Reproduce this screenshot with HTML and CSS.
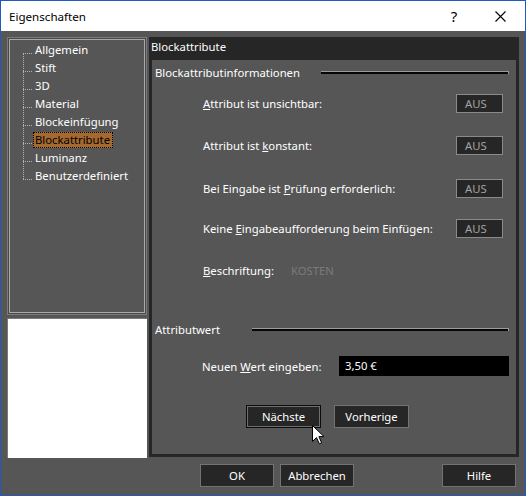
FILE: index.html
```html
<!DOCTYPE html>
<html lang="de">
<head>
<meta charset="utf-8">
<title>Eigenschaften</title>
<link rel="stylesheet" href="styles.css">
</head>
<body>
<div class="window">
  <div class="titlebar">
    <span class="title">Eigenschaften</span>
    <span class="tbtn help">?</span>
    <span class="tbtn close"><svg width="11" height="11" viewBox="0 0 11 11"><path d="M0.5 0.5 L10.5 10.5 M10.5 0.5 L0.5 10.5" stroke="#000" stroke-width="1.1" fill="none"/></svg></span>
  </div>
  <div class="content">
    <div class="main">
      <div class="leftcol">
        <div class="tree">
          <ul class="tree-list">
            <li><span class="item">Allgemein</span></li>
            <li><span class="item">Stift</span></li>
            <li><span class="item">3D</span></li>
            <li><span class="item">Material</span></li>
            <li><span class="item">Blockeinfügung</span></li>
            <li><span class="item selected">Blockattribute</span></li>
            <li><span class="item">Luminanz</span></li>
            <li><span class="item">Benutzerdefiniert</span></li>
          </ul>
        </div>
        <div class="preview"></div>
      </div>
      <div class="panel">
        <div class="panel-title">Blockattribute</div>
        <div class="panel-body">
          <div class="sec sec-info"><span class="sec-label">Blockattributinformationen</span><span class="rule rule-info"></span></div>
          <div class="row row-1"><span class="lbl"><u>A</u>ttribut ist unsichtbar:</span><span class="val">AUS</span></div>
          <div class="row row-2"><span class="lbl">Attribut ist <u>k</u>onstant:</span><span class="val">AUS</span></div>
          <div class="row row-3"><span class="lbl">Bei Eingabe ist <u>P</u>rüfung erforderlich:</span><span class="val">AUS</span></div>
          <div class="row row-4"><span class="lbl">Keine <u>E</u>ingabeaufforderung beim Einfügen:</span><span class="val">AUS</span></div>
          <div class="row row-5"><span class="lbl-fixed"><u>B</u>eschriftung:</span><span class="tag">KOSTEN</span></div>
          <div class="sec sec-value"><span class="sec-label">Attributwert</span><span class="rule rule-value"></span></div>
          <div class="input-row"><span class="lbl">Neuen <u>W</u>ert eingeben:</span><span class="input">3,50 €</span></div>
          <div class="nav-row"><span class="btn btn-default">Nächste</span><span class="btn">Vorherige</span></div>
        </div>
      </div>
    </div>
    <div class="buttons">
      <span class="btn dlg ok">OK</span>
      <span class="btn dlg cancel">Abbrechen</span>
      <span class="btn dlg hilfe">Hilfe</span>
    </div>
  </div>
  <svg class="cursor" width="13" height="20" viewBox="0 0 13 20"><path d="M0.5 0.5 L0.5 16.5 L4.5 12.5 L7.3 18.8 L9.6 17.8 L6.9 11.6 L12 11.6 Z" fill="#fff" stroke="#000" stroke-width="1"/></svg>
</div>
</body>
</html>
```
FILE: styles.css
```css
html, body {
  margin: 0;
  padding: 0;
  background: #565656;
}
body {
  font-family: "Noto Sans", "Open Sans", sans-serif;
  font-size: 11.3px;
  color: #fff;
}
.window {
  position: relative;
  width: 526px;
  height: 496px;
  box-sizing: border-box;
  border: 1px solid #1e5bbf;
  background: #565656;
  overflow: hidden;
}
.titlebar {
  height: 30px;
  background: #fff;
  display: flex;
  align-items: center;
  color: #000;
  font-size: 11.6px;
}
.title {
  margin-left: 8px;
  flex: 1;
}
.tbtn {
  width: 46px;
  height: 30px;
  display: flex;
  align-items: center;
  justify-content: center;
}
.help {
  font-size: 15px;
}
.close {
  margin-right: 2px;
}
.content {
  height: 464px;
  box-sizing: border-box;
  padding: 6px 6px 9px 6px;
  display: flex;
  flex-direction: column;
}
.main {
  display: flex;
  height: 421px;
  gap: 2px;
}
.leftcol {
  width: 140px;
  display: flex;
  flex-direction: column;
}
.tree {
  height: 278px;
  box-sizing: border-box;
  border: 1px solid #7b7b7b;
  box-shadow: inset 0 0 0 1px #4a4a4a, inset 0 0 0 2px #a8a8a8;
  padding-top: 3px;
}
.tree-list {
  position: relative;
  list-style: none;
  margin: 0 0 0 15px;
  padding: 0;
}
.tree-list::before {
  content: "";
  position: absolute;
  left: 0;
  top: 12px;
  bottom: 6px;
  border-left: 1px dotted #b4b4b4;
}
.tree-list li {
  height: 18px;
  display: flex;
  align-items: center;
}
.tree-list li::before {
  content: "";
  width: 9px;
  height: 0;
  border-top: 1px dotted #b4b4b4;
  margin-top: 6px;
  margin-right: 1px;
}
.item {
  display: inline-block;
  height: 14px;
  line-height: 14px;
  padding: 0 1px;
  border: 1px solid transparent;
  white-space: nowrap;
}
.item.selected {
  background: #a5692f;
  color: #000;
  border: 1px dotted #000;
  padding: 0 2px 0 1px;
}
.preview {
  margin-top: 3px;
  height: 140px;
  box-sizing: border-box;
  background: #fff;
  border-top: 1px solid #7a7a7a;
  border-left: 1px solid #7a7a7a;
}
.panel {
  width: 370px;
  height: 420px;
  box-sizing: border-box;
  background: #262626;
  padding: 0 3px 3px 3px;
  display: flex;
  flex-direction: column;
}
.panel-title {
  height: 23px;
  line-height: 18px;
  padding-top: 1px;
  box-sizing: border-box;
  margin-left: -1px;
}
.panel-body {
  flex: 1;
  background: #565656;
  display: flex;
  flex-direction: column;
}
.sec {
  height: 24px;
  display: flex;
  align-items: center;
  padding-left: 3px;
  padding-right: 7px;
}
.sec-label {
  flex: 1;
}
.rule {
  display: block;
  height: 2px;
  background: #050505;
  border-top: 1px solid #9a9a9a;
  border-right: 1px solid #9a9a9a;
}
.rule-info {
  width: 187px;
}
.rule-value {
  width: 256px;
}
.sec-value {
  margin-top: 37px;
}
.row {
  display: flex;
  align-items: center;
  height: 19px;
  padding-left: 51px;
  padding-right: 13px;
}
.row-1 { margin-top: 10px; }
.row-2 { margin-top: 23px; }
.row-3 { margin-top: 24px; }
.row-4 { margin-top: 21px; }
.row-5 { margin-top: 23px; }
.lbl {
  flex: 1;
  white-space: nowrap;
}
.val {
  width: 47px;
  height: 19px;
  box-sizing: border-box;
  border: 1px solid #8a8a8a;
  background: #262626;
  color: #a2a2a2;
  line-height: 17px;
  padding-left: 8px;
}
.lbl-fixed {
  width: 88px;
}
.tag {
  color: #7a7a7a;
}
.input-row {
  display: flex;
  align-items: center;
  height: 20px;
  margin-top: 15px;
  padding-left: 50px;
  padding-right: 7px;
}
.input {
  width: 170px;
  height: 20px;
  box-sizing: border-box;
  background: #000;
  color: #fff;
  line-height: 20px;
  padding-left: 6px;
}
.nav-row {
  display: flex;
  margin-top: 29px;
  padding-left: 94px;
  gap: 13px;
}
.btn {
  width: 75px;
  height: 23px;
  box-sizing: border-box;
  border: 1px solid #737373;
  background: #262626;
  color: #fff;
  display: flex;
  align-items: center;
  justify-content: center;
}
.btn-default {
  border: 1px solid #0c0c0c;
  box-shadow: inset 0 0 0 1px #6e6e6e;
}
.buttons {
  display: flex;
  margin-top: 6px;
  padding-right: 3px;
}
.btn.dlg {
  width: 74px;
}
.ok {
  margin-left: 193px;
}
.cancel {
  margin-left: 6px;
}
.hilfe {
  margin-left: auto;
}
.cursor {
  position: absolute;
  left: 311px;
  top: 424px;
}
```
